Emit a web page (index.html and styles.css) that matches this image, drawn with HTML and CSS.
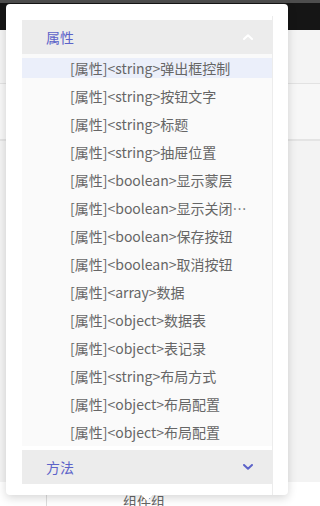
FILE: index.html
```html
<!DOCTYPE html>
<html lang="zh-CN">
<head>
<meta charset="utf-8">
<title>属性方法</title>
<link rel="stylesheet" href="styles.css">
</head>
<body>
<div class="page">
  <div class="topbar"></div>
  <div class="row row-a"></div>
  <div class="row row-b"></div>
  <div class="tree-row">
    <div class="tree-line"><span class="tree-label">组件组</span></div>
  </div>
</div>

<div class="popover">
  <div class="scroller">
    <div class="group-head open">
      <span class="group-title">属性</span>
      <svg class="chev" width="10" height="6" viewBox="0 0 10 6"><path d="M1 5 L5 1.3 L9 5" fill="none" stroke="#ffffff" stroke-width="2" stroke-linecap="round" stroke-linejoin="round"/></svg>
    </div>
    <ul class="items">
      <li class="item active">[属性]&lt;string&gt;弹出框控制</li>
      <li class="item">[属性]&lt;string&gt;按钮文字</li>
      <li class="item">[属性]&lt;string&gt;标题</li>
      <li class="item">[属性]&lt;string&gt;抽屉位置</li>
      <li class="item">[属性]&lt;boolean&gt;显示蒙层</li>
      <li class="item">[属性]&lt;boolean&gt;显示关闭按钮</li>
      <li class="item">[属性]&lt;boolean&gt;保存按钮</li>
      <li class="item">[属性]&lt;boolean&gt;取消按钮</li>
      <li class="item">[属性]&lt;array&gt;数据</li>
      <li class="item">[属性]&lt;object&gt;数据表</li>
      <li class="item">[属性]&lt;object&gt;表记录</li>
      <li class="item">[属性]&lt;string&gt;布局方式</li>
      <li class="item">[属性]&lt;object&gt;布局配置</li>
      <li class="item">[属性]&lt;object&gt;布局配置</li>
    </ul>
    <div class="group-head closed">
      <span class="group-title">方法</span>
      <svg class="chev" width="10" height="6" viewBox="0 0 10 6"><path d="M1 1 L5 4.7 L9 1" fill="none" stroke="#5c63c9" stroke-width="2" stroke-linecap="round" stroke-linejoin="round"/></svg>
    </div>
  </div>
</div>
</body>
</html>
```

FILE: styles.css
```css
html, body {
  margin: 0;
  padding: 0;
}
html {
  background: #f3f3f3;
}
body {
  height: 506px;
  overflow: hidden;
  background: #f3f3f3;
  font-family: "Noto Sans CJK SC", "Noto Sans", sans-serif;
  position: relative;
}
.page {
  height: 506px;
  display: flex;
  flex-direction: column;
}
.topbar {
  height: 27px;
  background: #151515;
  border-top: 3px solid #4d4d4d;
  flex: none;
}
.row {
  flex: none;
  border-bottom: 1px solid #e2e2e2;
}
.row-a {
  height: 53px;
  background: #f4f4f4;
}
.row-b {
  height: 55px;
  background: #f7f7f7;
  border-bottom: 2px solid #e4e4e4;
}
.tree-row {
  margin-top: auto;
  height: 24px;
  background: #ffffff;
  flex: none;
}
.tree-line {
  margin-left: 46px;
  height: 100%;
  border-left: 1px solid #dddddd;
  box-sizing: border-box;
  padding-top: 6px;
  padding-left: 76px;
}
.tree-label {
  font-size: 14px;
  line-height: 18px;
  color: #666666;
}

.popover {
  position: absolute;
  left: 6px;
  top: 4px;
  width: 282px;
  height: 491px;
  box-sizing: border-box;
  background: #ffffff;
  border-radius: 4px;
  box-shadow: 0 3px 10px rgba(0, 0, 0, 0.16);
  padding: 12px 15px 0 16px;
}
.popover::after {
  content: "";
  position: absolute;
  left: 137px;
  bottom: -4px;
  width: 8px;
  height: 8px;
  background: #ffffff;
  transform: rotate(45deg);
}
.scroller {
  padding-top: 4px;
  border-right: 1px solid #ececec;
  height: 100%;
  box-sizing: border-box;
}
.group-head {
  height: 34px;
  background: #ececec;
  display: flex;
  align-items: center;
  justify-content: space-between;
  padding: 0 19px 0 24px;
}
.group-head.closed {
  margin-top: 4px;
}
.group-title {
  font-size: 14px;
  color: #5c63c9;
  line-height: 20px;
}
.chev {
  display: block;
}
.items {
  list-style: none;
  margin: 0;
  padding: 4px 0;
  background: #fafafa;
  display: flex;
  flex-direction: column;
  gap: 8px;
}
.item {
  height: 20px;
  line-height: 20px;
  font-size: 14px;
  color: #666666;
  padding: 0 24px 0 48px;
  white-space: nowrap;
  overflow: hidden;
  text-overflow: ellipsis;
}
.item.active {
  background: #ebeffa;
}
```
